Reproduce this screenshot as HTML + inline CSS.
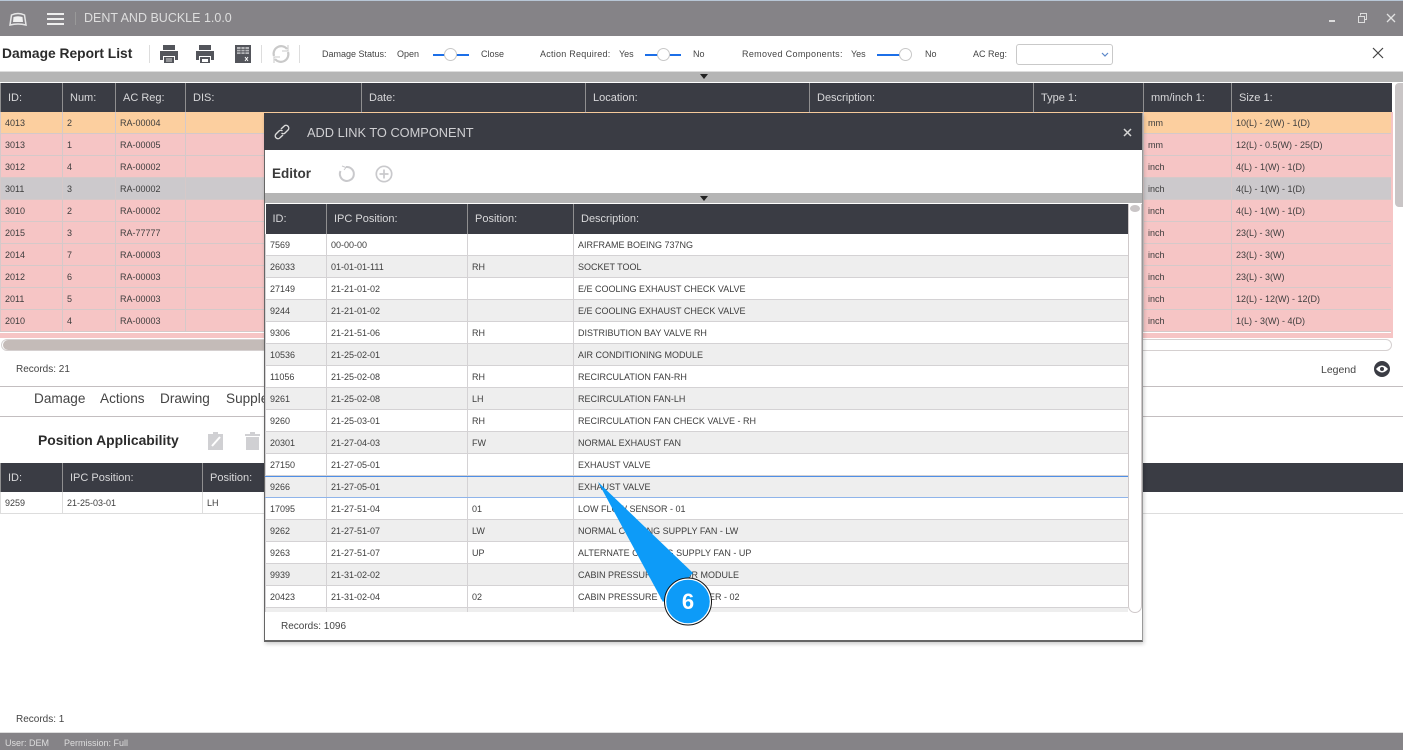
<!DOCTYPE html>
<html><head><meta charset="utf-8"><style>
html,body{margin:0;padding:0;width:1403px;height:750px;overflow:hidden;background:#fff;font-family:"Liberation Sans",sans-serif;color:#333}
.a{position:absolute;white-space:nowrap}
table{border-collapse:collapse;table-layout:fixed;position:absolute}
th{background:#3a3c44;color:#d8d8da;font-weight:normal;text-align:left;font-size:11px;padding:0 0 0 7px;height:30px;border-left:1px solid #8f8f90;white-space:nowrap;overflow:hidden}
td{font-size:9px;color:#3d3d3d;padding:0 0 0 4px;height:21px;border:1px solid #d5c9c9;border-top:0;white-space:nowrap;overflow:hidden}
.t29 th{height:29px}
.t29 td{padding-top:1px;height:20px}
#m tr td{background:#f6c5c5}
#m tr.o td{background:#fccf9f}
#m tr.g td{background:#ccc9cc}
#p td{border-color:#d4d2d4}
#p tr:nth-child(odd) td{background:#eeeeee}
.s1{position:absolute;height:2px;background:#1c6fe8;top:54px}
.kn{position:absolute;width:13px;height:13px;border-radius:50%;background:#fff;border:1px solid #c8c8c8;top:48px;box-sizing:border-box}
.l{font-size:9px;color:#444;top:49px}
</style></head><body>
<div class="a" style="left:0;top:0;width:1403px;height:36px;background:#858387"></div>
<div class="a" style="left:0;top:0;width:1403px;height:1px;background:#b7c6d6"></div>
<svg class="a" style="left:7px;top:12px" width="22" height="15" viewBox="0 0 22 15" fill="none"><path d="M3 13 L4.500 3 Q11 0 17.500 3 L19 13 Q11 11 3 13Z" stroke="#e6e6e6" stroke-width="1.500"/><path d="M6 10 L6.500 5 Q11 3.500 15.500 5 L16 10Z" fill="#f1f1f1"/></svg>
<div class="a" style="left:47px;top:13px;width:17px;height:2px;background:#eee"></div>
<div class="a" style="left:47px;top:18px;width:17px;height:2px;background:#eee"></div>
<div class="a" style="left:47px;top:23px;width:17px;height:2px;background:#eee"></div>
<div class="a" style="left:75px;top:12px;width:1px;height:13px;background:#999"></div>
<div class="a" style="left:84px;top:11px;font-size:12.500px;color:#dedede">DENT AND BUCKLE 1.0.0</div>
<div class="a" style="left:1329px;top:20px;width:6px;height:2px;background:#ddd"></div>
<svg class="a" style="left:1357px;top:13px" width="11" height="11" fill="none" stroke="#ddd"><path d="M3.500 2.500V0.500H9.500V6.500H7.500M1.500 3.500H7.500V9.500H1.500Z"/></svg>
<svg class="a" style="left:1386px;top:13px" width="10" height="10" stroke="#e2e2e2" stroke-width="1.300"><path d="M1 1L9 9M9 1L1 9"/></svg>

<div class="a" style="left:2px;top:46px;font-size:13.800px;font-weight:bold;color:#2b2b2b">Damage Report List</div>
<div class="a" style="left:149px;top:45px;width:1px;height:18px;background:#ddd"></div>
<svg class="a" style="left:159px;top:44px" width="20" height="20" fill="#53555b"><path d="M4 1H16V6H4ZM1 7H19V16H16V12H4V16H1ZM5 13H15V19H5Z"/><path d="M7 15H13M7 17H13" stroke="#fff" stroke-width=".7"/></svg>
<svg class="a" style="left:195px;top:44px" width="20" height="20" fill="#53555b"><path d="M4 1H16V6H4ZM1 7H19V16H16V12H4V16H1ZM5 13H15V19H5Z"/><path d="M7 15H13V18H7Z" fill="#fff"/></svg>
<svg class="a" style="left:235px;top:45px" width="16" height="18"><rect width="16" height="18" fill="#53555b"/><path d="M2 2H14V9H2Z" fill="#b5b6b9"/><path d="M2 4.500H14M2 6.800H14M6 2V9M10 2V9" stroke="#53555b" stroke-width=".8"/><path d="M10 12L13 16M13 12L10 16" stroke="#fff"/></svg>
<div class="a" style="left:261px;top:45px;width:1px;height:18px;background:#ddd"></div>
<svg class="a" style="left:271px;top:44px" width="20" height="20" fill="none" stroke="#c9c9c9" stroke-width="2.200"><path d="M3 12A7.500 7.500 0 0 1 16 5M17 8A7.500 7.500 0 0 1 4 15"/><path d="M17 1V7H11M3 19V13H9" stroke-width="1"/></svg>
<div class="a" style="left:299px;top:45px;width:1px;height:18px;background:#ddd"></div>

<div class="a l" style="left:322px">Damage Status:</div><div class="a l" style="left:397px">Open</div><div class="a l" style="left:481px">Close</div>
<div class="s1" style="left:433px;width:36px"></div><div class="kn" style="left:444px"></div>
<div class="a l" style="left:540px;letter-spacing:.25px">Action Required:</div><div class="a l" style="left:619px">Yes</div><div class="a l" style="left:693px">No</div>
<div class="s1" style="left:645px;width:36px"></div><div class="kn" style="left:657px"></div>
<div class="a l" style="left:742px;letter-spacing:.33px">Removed Components:</div><div class="a l" style="left:851px">Yes</div><div class="a l" style="left:925px">No</div>
<div class="s1" style="left:877px;width:30px"></div><div class="kn" style="left:899px"></div>
<div class="a l" style="left:973px">AC Reg:</div>
<div class="a" style="left:1016px;top:44px;width:95px;height:19px;border:1px solid #c9c9c9;border-radius:3px;background:#fff"></div>
<svg class="a" style="left:1101px;top:52px" width="8" height="6" fill="none" stroke="#5b87c9" stroke-width="1.200"><path d="M1 1L4 4L7 1"/></svg>
<svg class="a" style="left:1372px;top:47px" width="12" height="12" stroke="#444" stroke-width="1.200"><path d="M1 1L11 11M11 1L1 11"/></svg>

<div class="a" style="left:0;top:71px;width:1403px;height:1px;background:#ddd"></div>
<div class="a" style="left:0;top:72px;width:1403px;height:10px;background:#b5b5b5"></div>
<div class="a" style="left:700px;top:74px;width:0;height:0;border-left:4px solid transparent;border-right:4px solid transparent;border-top:5px solid #222"></div>

<table id="m" class="t29" style="left:0;top:83px;width:1391px">
<colgroup><col style="width:62px"><col style="width:53px"><col style="width:70px"><col style="width:176px"><col style="width:224px"><col style="width:224px"><col style="width:224px"><col style="width:110px"><col style="width:88px"><col style="width:160px"></colgroup>
<tr><th>ID:</th><th>Num:</th><th>AC Reg:</th><th>DIS:</th><th>Date:</th><th>Location:</th><th>Description:</th><th>Type 1:</th><th>mm/inch 1:</th><th>Size 1:</th></tr>
<tr class="o"><td>4013</td><td>2</td><td>RA-00004</td><td></td><td></td><td></td><td></td><td></td><td>mm</td><td>10(L) - 2(W) - 1(D)</td></tr>
<tr><td>3013</td><td>1</td><td>RA-00005</td><td></td><td></td><td></td><td></td><td></td><td>mm</td><td>12(L) - 0.5(W) - 25(D)</td></tr>
<tr><td>3012</td><td>4</td><td>RA-00002</td><td></td><td></td><td></td><td></td><td></td><td>inch</td><td>4(L) - 1(W) - 1(D)</td></tr>
<tr class="g"><td>3011</td><td>3</td><td>RA-00002</td><td></td><td></td><td></td><td></td><td></td><td>inch</td><td>4(L) - 1(W) - 1(D)</td></tr>
<tr><td>3010</td><td>2</td><td>RA-00002</td><td></td><td></td><td></td><td></td><td></td><td>inch</td><td>4(L) - 1(W) - 1(D)</td></tr>
<tr><td>2015</td><td>3</td><td>RA-77777</td><td></td><td></td><td></td><td></td><td></td><td>inch</td><td>23(L) - 3(W)</td></tr>
<tr><td>2014</td><td>7</td><td>RA-00003</td><td></td><td></td><td></td><td></td><td></td><td>inch</td><td>23(L) - 3(W)</td></tr>
<tr><td>2012</td><td>6</td><td>RA-00003</td><td></td><td></td><td></td><td></td><td></td><td>inch</td><td>23(L) - 3(W)</td></tr>
<tr><td>2011</td><td>5</td><td>RA-00003</td><td></td><td></td><td></td><td></td><td></td><td>inch</td><td>12(L) - 12(W) - 12(D)</td></tr>
<tr><td>2010</td><td>4</td><td>RA-00003</td><td></td><td></td><td></td><td></td><td></td><td>inch</td><td>1(L) - 3(W) - 4(D)</td></tr>
</table>
<div class="a" style="left:0;top:333px;width:1393px;height:5px;background:#f6c5c5"></div>
<div class="a" style="left:1391px;top:112px;width:2px;height:226px;background:#f6c5c5"></div>
<div class="a" style="left:1395px;top:83px;width:8px;height:124px;background:#c9c5c6;border-radius:4px 0 0 4px"></div>
<div class="a" style="left:1px;top:339px;width:1391px;height:12px;border:1px solid #d5d0d0;border-radius:6px;box-sizing:border-box"></div>
<div class="a" style="left:3px;top:340px;width:270px;height:10px;background:#c4bbb8;border-radius:5px"></div>

<div class="a" style="left:16px;top:364px;font-size:10px;color:#444">Records: 21</div>
<div class="a" style="left:1321px;top:364px;font-size:10.500px;color:#444">Legend</div>
<div class="a" style="left:1374px;top:361px;width:16px;height:16px;border-radius:50%;background:#3a3c44"></div>
<svg class="a" style="left:1376px;top:365px" width="12" height="8"><path d="M0 4Q6 -3 12 4Q6 11 0 4Z" fill="#fff"/><circle cx="6" cy="4" r="2" fill="#3a3c44"/></svg>
<div class="a" style="left:0;top:386px;width:1403px;height:1px;background:#c3bec0"></div>
<div class="a" style="left:34px;top:391px;font-size:13.600px;color:#444">Damage</div>
<div class="a" style="left:100px;top:391px;font-size:13.600px;color:#444">Actions</div>
<div class="a" style="left:160px;top:391px;font-size:13.600px;color:#444">Drawing</div>
<div class="a" style="left:226px;top:391px;font-size:13.600px;color:#444">Supplement</div>
<div class="a" style="left:0;top:416px;width:1403px;height:1px;background:#c3bec0"></div>
<div class="a" style="left:38px;top:432px;font-size:13.900px;font-weight:bold;color:#2b2b2b">Position Applicability</div>
<svg class="a" style="left:208px;top:432px" width="16" height="18" fill="#d0d0d3"><path d="M0 2H5V0H10V2H15V18H0Z"/><path d="M4 14L12 5" stroke="#fff" stroke-width="2"/></svg>
<svg class="a" style="left:245px;top:432px" width="16" height="18" fill="#d0d0d3"><path d="M0 2H5V0H10V2H15V4H0ZM1 5H14V18H1Z"/></svg>

<table class="t29" style="left:0;top:463px;width:1403px">
<colgroup><col style="width:62px"><col style="width:140px"><col style="width:1201px"></colgroup>
<tr><th>ID:</th><th>IPC Position:</th><th>Position:</th></tr>
<tr><td style="border-color:#ddd">9259</td><td style="border-color:#ddd">21-25-03-01</td><td style="border-color:#ddd">LH</td></tr>
</table>

<div class="a" style="left:16px;top:714px;font-size:10px;color:#444">Records: 1</div>
<div class="a" style="left:0;top:732px;width:1403px;height:1px;background:#ddd"></div>
<div class="a" style="left:0;top:733px;width:1403px;height:17px;background:#858387"></div>
<div class="a" style="left:5px;top:738px;font-size:9px;color:#ddd">User: DEM</div>
<div class="a" style="left:64px;top:738px;font-size:9px;color:#ddd">Permission: Full</div>

<!-- modal -->
<div class="a" style="left:264px;top:113px;width:879px;height:529px;background:#fff;border-left:1px solid #666;border-bottom:2px solid #666;border-right:1px solid #999;box-sizing:border-box;box-shadow:1px 2px 4px rgba(0,0,0,.2)"></div>
<div class="a" style="left:264px;top:113px;width:878px;height:37px;background:#3a3c44"></div>
<svg class="a" style="left:274px;top:124px" width="16" height="16" fill="none" stroke="#dcdcdc" stroke-width="1.400"><path d="M7 5L10 2.200A2.500 2.500 0 0 1 14 6L11 9A2.500 2.500 0 0 1 7.500 9M9 11L6 13.800A2.500 2.500 0 0 1 2 10L5 7A2.500 2.500 0 0 1 8.500 7"/></svg>
<div class="a" style="left:307px;top:125px;font-size:12.800px;color:#cfcfd2">ADD LINK TO COMPONENT</div>
<svg class="a" style="left:1123px;top:128px" width="9" height="9" stroke="#d5d5d5" stroke-width="1.500"><path d="M1 1L8 8M8 1L1 8"/></svg>
<div class="a" style="left:272px;top:166px;font-size:13.500px;font-weight:bold;color:#3a3a3a">Editor</div>
<svg class="a" style="left:338px;top:165px" width="18" height="18" fill="none" stroke="#c9c9cc" stroke-width="2"><path d="M8 2A7 7 0 1 1 2.500 6"/><path d="M4 1L8 2.500L6 5" stroke-width="1"/></svg>
<svg class="a" style="left:375px;top:165px" width="18" height="18" fill="none" stroke="#c9c9cc" stroke-width="1.700"><circle cx="9" cy="9" r="7.700"/><path d="M9 4.500V13.500M4.500 9H13.500"/></svg>
<div class="a" style="left:265px;top:193px;width:877px;height:10px;background:#b5b5b5"></div>
<div class="a" style="left:700px;top:196px;width:0;height:0;border-left:4px solid transparent;border-right:4px solid transparent;border-top:5px solid #222"></div>

<div class="a" style="left:265px;top:204px;width:863px;height:408px;overflow:hidden">
<table id="p" style="left:0;top:0;width:863px">
<colgroup><col style="width:61px"><col style="width:141px"><col style="width:106px"><col style="width:555px"></colgroup>
<tr><th style="border-left:0">ID:</th><th>IPC Position:</th><th>Position:</th><th>Description:</th></tr>
<tr><td>7569</td><td>00-00-00</td><td></td><td>AIRFRAME BOEING 737NG</td></tr>
<tr><td>26033</td><td>01-01-01-111</td><td>RH</td><td>SOCKET TOOL</td></tr>
<tr><td>27149</td><td>21-21-01-02</td><td></td><td>E/E COOLING EXHAUST CHECK VALVE</td></tr>
<tr><td>9244</td><td>21-21-01-02</td><td></td><td>E/E COOLING EXHAUST CHECK VALVE</td></tr>
<tr><td>9306</td><td>21-21-51-06</td><td>RH</td><td>DISTRIBUTION BAY VALVE RH</td></tr>
<tr><td>10536</td><td>21-25-02-01</td><td></td><td>AIR CONDITIONING MODULE</td></tr>
<tr><td>11056</td><td>21-25-02-08</td><td>RH</td><td>RECIRCULATION FAN-RH</td></tr>
<tr><td>9261</td><td>21-25-02-08</td><td>LH</td><td>RECIRCULATION FAN-LH</td></tr>
<tr><td>9260</td><td>21-25-03-01</td><td>RH</td><td>RECIRCULATION FAN CHECK VALVE - RH</td></tr>
<tr><td>20301</td><td>21-27-04-03</td><td>FW</td><td>NORMAL EXHAUST FAN</td></tr>
<tr><td>27150</td><td>21-27-05-01</td><td></td><td>EXHAUST VALVE</td></tr>
<tr><td>9266</td><td>21-27-05-01</td><td></td><td>EXHAUST VALVE</td></tr>
<tr><td>17095</td><td>21-27-51-04</td><td>01</td><td>LOW FLOW SENSOR - 01</td></tr>
<tr><td>9262</td><td>21-27-51-07</td><td>LW</td><td>NORMAL COOLING SUPPLY FAN - LW</td></tr>
<tr><td>9263</td><td>21-27-51-07</td><td>UP</td><td>ALTERNATE COOLING SUPPLY FAN - UP</td></tr>
<tr><td>9939</td><td>21-31-02-02</td><td></td><td>CABIN PRESSURE SENSOR MODULE</td></tr>
<tr><td>20423</td><td>21-31-02-04</td><td>02</td><td>CABIN PRESSURE CONTROLLER - 02</td></tr>
<tr><td></td><td></td><td></td><td></td></tr>
</table>
</div>
<div class="a" style="left:265px;top:476px;width:863px;height:1px;background:#4f8fe6"></div>
<div class="a" style="left:265px;top:497px;width:863px;height:1px;background:#8fb4ea"></div>
<div class="a" style="left:1128px;top:204px;width:14px;height:409px;border:1px solid #cfc9ca;border-top:0;border-radius:0 0 7px 7px;box-sizing:border-box;background:#fff"></div>
<div class="a" style="left:1130px;top:205px;width:10px;height:7px;background:#c9c5c6;border-radius:50%"></div>
<div class="a" style="left:281px;top:621px;font-size:10px;color:#444">Records: 1096</div>

<!-- callout -->
<svg class="a" style="left:590px;top:475px" width="130" height="160">
<path d="M8 7L103 98L73 127Z" fill="#0d9bf8"/>
<circle cx="98" cy="126.500" r="22.500" fill="#0d9bf8" stroke="#fff" stroke-width="1.500"/>
<circle cx="98" cy="126.500" r="23.500" fill="none" stroke="#111" stroke-width="1"/>
<text x="98" y="134" text-anchor="middle" font-family="Liberation Sans" font-weight="bold" font-size="22" fill="#fff">6</text>
</svg>
</body></html>
